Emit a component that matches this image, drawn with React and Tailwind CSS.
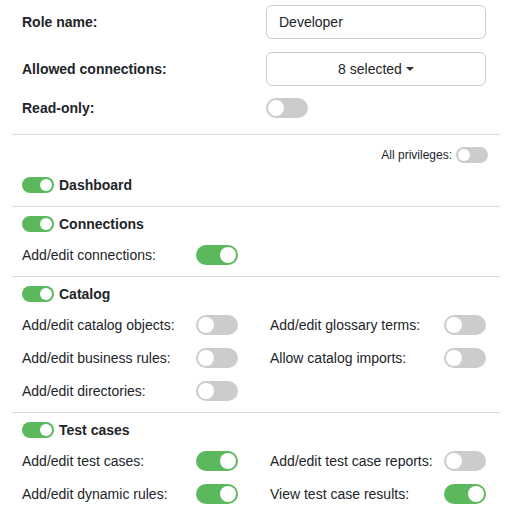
import React from "react";

function Toggle({ on, size = "md" }) {
  const sm = size === "sm";
  const track = sm ? "w-[32px] h-[16px]" : "w-[42px] h-[20px]";
  const knob = sm ? "w-[12px] h-[12px]" : "w-[16px] h-[16px]";
  return (
    <div
      className={`${track} rounded-full flex items-center px-[2px] shrink-0 ${
        on ? "bg-[#5cb85c] justify-end" : "bg-[#cccccc] justify-start"
      }`}
    >
      <div className={`${knob} rounded-full bg-white`} />
    </div>
  );
}

function Row({ label, on }) {
  return (
    <div className="flex items-center h-5">
      <div className="w-[174px] text-[14px] leading-5">{label}</div>
      <Toggle on={on} />
    </div>
  );
}

function Section({ title, rows, border = true }) {
  return (
    <div className={`${border ? "border-t border-[#dddddd] pt-[7px]" : ""} pb-[11px] px-[10px]`}>
      <div className="flex items-center h-5 gap-[5px]">
        <Toggle on size="sm" />
        <span className="font-bold text-[14px]">{title}</span>
      </div>
      {rows && (
        <div className="grid grid-cols-[248px_248px] gap-y-[13px] mt-[11px]">
          {rows.map((r, i) =>
            r ? <Row key={i} label={r[0]} on={r[1]} /> : <div key={i} />
          )}
        </div>
      )}
    </div>
  );
}

export default function App() {
  return (
    <div
      className="w-[512px] h-[510px] bg-white text-[#212529] px-3 overflow-hidden"
      style={{ fontFamily: '"Liberation Sans", Arial, sans-serif' }}
    >
      <div className="px-[10px] pt-[5px] flex flex-col">
        <div className="flex items-center h-[34px]">
          <div className="w-[244px] font-bold text-[14px]">Role name:</div>
          <div className="w-[220px] h-[34px] border border-[#cccccc] rounded-[6px] flex items-center px-[12px] text-[14px]">
            Developer
          </div>
        </div>
        <div className="flex items-center h-[34px] mt-[13px]">
          <div className="w-[244px] font-bold text-[14px]">Allowed connections:</div>
          <div className="w-[220px] h-[34px] border border-[#cccccc] rounded-[6px] flex items-center justify-center gap-[4px] text-[14px]">
            <span>8 selected</span>
            <svg width="8" height="5" viewBox="0 0 8 5">
              <polygon points="0,0 8,0 4,4" fill="#333" />
            </svg>
          </div>
        </div>
        <div className="flex items-center h-5 mt-[12px]">
          <div className="w-[244px] font-bold text-[14px]">Read-only:</div>
          <Toggle on={false} />
        </div>
      </div>
      <div className="border-t border-[#dddddd] mt-[16px]" />
      <div className="flex justify-end items-center gap-[4px] h-4 mt-[12px] pr-[12px]">
        <span className="text-[12px]">All privileges:</span>
        <Toggle on={false} size="sm" />
      </div>
      <div className="pt-[12px]">
        <Section title="Dashboard" border={false} />
        <Section title="Connections" rows={[["Add/edit connections:", true]]} />
        <Section
          title="Catalog"
          rows={[
            ["Add/edit catalog objects:", false],
            ["Add/edit glossary terms:", false],
            ["Add/edit business rules:", false],
            ["Allow catalog imports:", false],
            ["Add/edit directories:", false],
          ]}
        />
        <Section
          title="Test cases"
          rows={[
            ["Add/edit test cases:", true],
            ["Add/edit test case reports:", false],
            ["Add/edit dynamic rules:", true],
            ["View test case results:", true],
          ]}
        />
      </div>
    </div>
  );
}
